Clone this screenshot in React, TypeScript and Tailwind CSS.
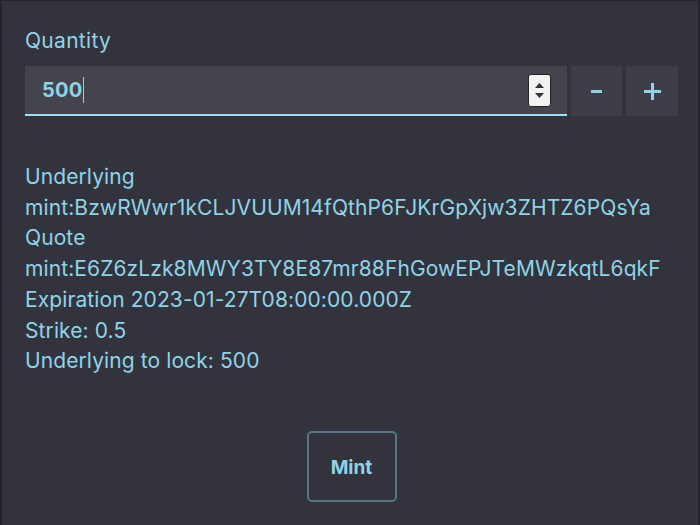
import React, { useState } from "react";

const App: React.FC = () => {
  const [quantity, setQuantity] = useState(500);

  const info = [
    "Underlying",
    "mint:BzwRWwr1kCLJVUUM14fQthP6FJKrGpXjw3ZHTZ6PQsYa",
    "Quote",
    "mint:E6Z6zLzk8MWY3TY8E87mr88FhGowEPJTeMWzkqtL6qkF",
    "Expiration 2023-01-27T08:00:00.000Z",
    "Strike: 0.5",
    `Underlying to lock: ${quantity}`,
  ];

  return (
    <div
      className="w-[700px] h-[525px] bg-[#33333d] border-t border-l-2 border-r-2 border-[#24242b] text-[#8fd3e8] overflow-hidden"
      style={{ fontFamily: "Inter, 'Noto Sans', sans-serif" }}
    >
      <div className="pl-[23px] pr-[20px] pt-[26px]">
        {/* Quantity */}
        <div className="text-[21px] leading-[28px] tracking-[0.3px]">Quantity</div>
        <div className="flex gap-[4px] mt-[11px]">
          <div className="flex-1 h-[50px] bg-[#44444e] border-b-2 border-[#9be0f5] flex items-center pl-[17px] pr-[16px]">
            <span className="text-[20px] font-bold tracking-[0.2px]">{quantity}</span>
            <span className="w-[1px] h-[26px] bg-[#8fd3e8] ml-[1px]" />
            <div className="ml-auto w-[23px] h-[33px] bg-[#f2f2f2] border border-[#222] rounded-[3px] flex flex-col items-center justify-center gap-[5px]">
              <svg width="9" height="5" viewBox="0 0 9 5">
                <path d="M0 5 L4.5 0 L9 5 Z" fill="#333" />
              </svg>
              <svg width="9" height="5" viewBox="0 0 9 5">
                <path d="M0 0 L4.5 5 L9 0 Z" fill="#333" />
              </svg>
            </div>
          </div>
          <button
            onClick={() => setQuantity((q) => Math.max(0, q - 1))}
            className="w-[51px] h-[50px] bg-[#3e3e48] flex items-center justify-center"
          >
            <span className="w-[11px] h-[3px] bg-[#8fd3e8]" />
          </button>
          <button
            onClick={() => setQuantity((q) => q + 1)}
            className="w-[52px] h-[50px] bg-[#3e3e48] flex items-center justify-center"
          >
            <svg width="17" height="17" viewBox="0 0 17 17">
              <rect x="7" y="0" width="3" height="17" fill="#8fd3e8" />
              <rect x="0" y="7" width="17" height="3" fill="#8fd3e8" />
            </svg>
          </button>
        </div>

        {/* Details */}
        <div className="mt-[46px] text-[21px] leading-[30.7px] tracking-[0.1px]">
          {info.map((line) => (
            <div key={line}>{line}</div>
          ))}
        </div>

        {/* Mint button */}
        <div className="flex justify-center mt-[54px]">
          <button className="w-[90px] h-[71px] pt-[3px] border-2 border-[#577482] rounded-[5px] text-[19px] font-bold text-[#8fd3e8]">
            Mint
          </button>
        </div>
      </div>
    </div>
  );
};

export default App;
